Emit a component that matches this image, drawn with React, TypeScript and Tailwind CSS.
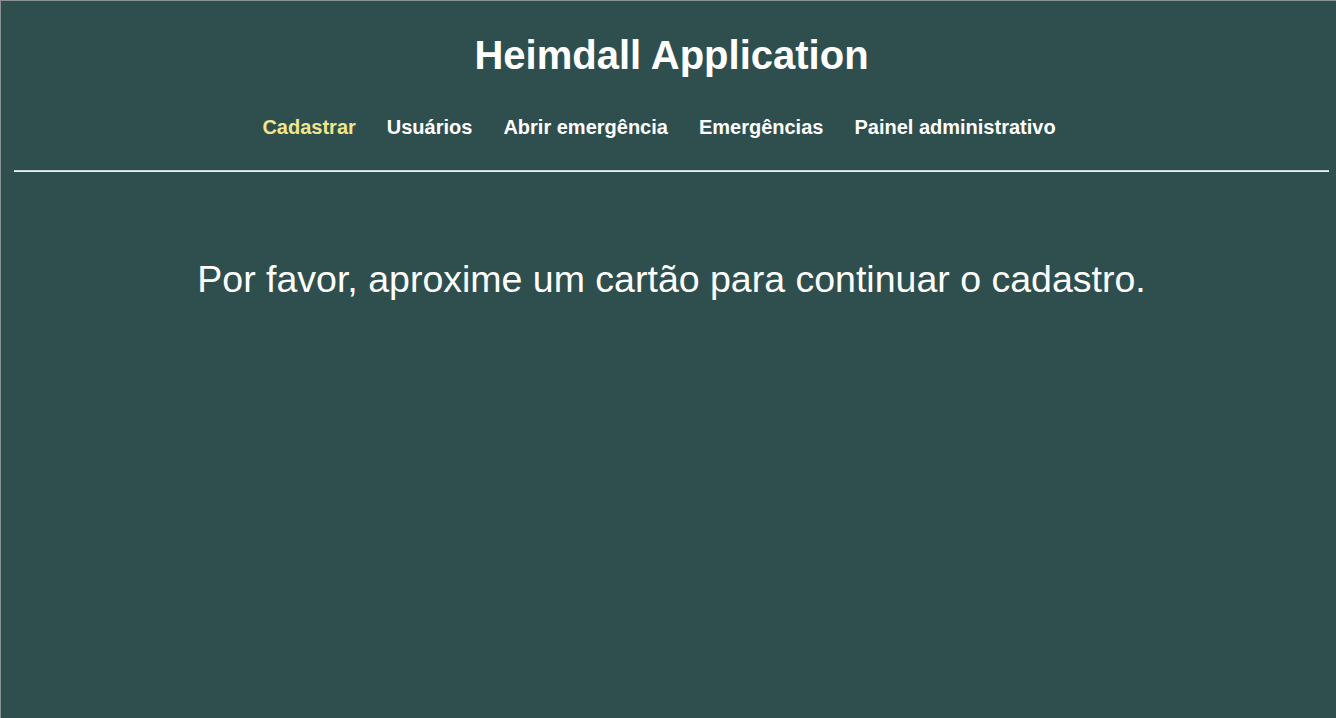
export default function App() {
  const links = ["Cadastrar", "Usuários", "Abrir emergência", "Emergências", "Painel administrativo"];
  return (
    <div className="w-[1336px] h-[718px] bg-[#2f4f4f] border-t border-l border-[#8a9494] font-['Liberation_Sans',Arial,sans-serif] text-white overflow-hidden">
      <div className="w-[1341px]">
        <h1 className="pt-[31px] text-center text-[40px] leading-[46px] font-bold">Heimdall Application</h1>
        <nav className="mt-[38px] pr-[25px] flex justify-center gap-[31px] text-[20px] leading-[23px] font-bold">
          {links.map((l, i) => (
            <span key={l} className={i === 0 ? "text-[#f0e68c]" : "text-white"}>{l}</span>
          ))}
        </nav>
        <div className="mt-[31px] ml-[13px] mr-[13px] h-[2px] border-t border-b border-t-[#c9d3d3] border-b-[#eef2f2]" />
        <p className="mt-[86px] text-center text-[37.5px] leading-[43px]">Por favor, aproxime um cartão para continuar o cadastro.</p>
      </div>
    </div>
  );
}
